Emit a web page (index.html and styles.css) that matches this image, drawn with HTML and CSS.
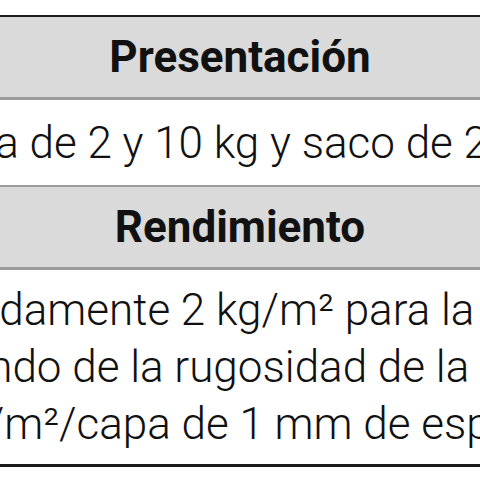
FILE: index.html
```html
<!DOCTYPE html>
<html lang="es">
<head>
<meta charset="utf-8">
<title>Ficha técnica</title>
<link rel="stylesheet" href="styles.css">
</head>
<body>
<div class="sheet">
  <div class="head head-first">Presentación</div>
  <div class="cell cell-single">
    <span class="line">Bolsa de 2 y 10 kg y saco de 25 kg</span>
  </div>
  <div class="head">Rendimiento</div>
  <div class="cell cell-multi">
    <span class="line">Aproximadamente 2 kg/m² para la primera y</span>
    <span class="line">dependiendo de la rugosidad de la superficie</span>
    <span class="line">1,5 kg/m²/capa de 1 mm de espesor y</span>
  </div>
</div>
</body>
</html>
```

FILE: styles.css
```css
html, body {
  margin: 0;
  padding: 0;
  background: #ffffff;
  overflow: hidden;
}

body {
  font-family: Roboto, "Liberation Sans", sans-serif;
  color: #111111;
}

.sheet {
  margin-top: 15px;
  border-top: 2px solid #1c1c1c;
  border-bottom: 3px solid #1c1c1c;
  display: flex;
  flex-direction: column;
}

.head {
  height: 80px;
  background: #dadada;
  border-bottom: 3px solid #9b9b9b;
  display: flex;
  justify-content: center;
  align-items: center;
  font-weight: 700;
  font-size: 44px;
  white-space: nowrap;
}

.cell {
  display: flex;
  flex-direction: column;
  align-items: center;
  font-weight: 300;
  font-size: 44px;
  white-space: nowrap;
}

.cell-single {
  height: 85px;
  justify-content: center;
  border-bottom: 2px solid #9b9b9b;
}

.cell-multi {
  height: 194px;
  justify-content: center;
  line-height: 57px;
}

.line {
  display: block;
}
```
